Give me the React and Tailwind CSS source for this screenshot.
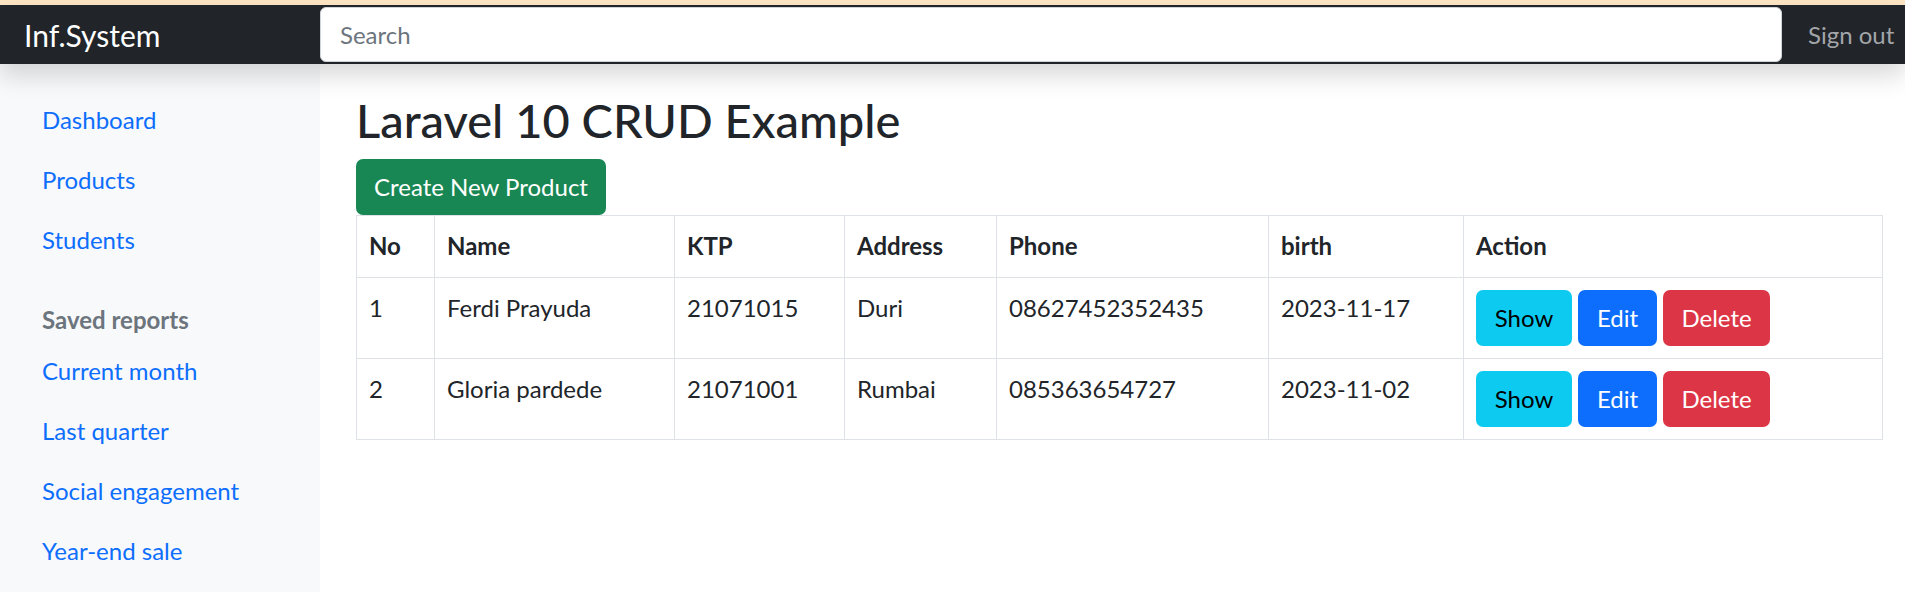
const sideLinks = ['Dashboard', 'Products', 'Students']
const reports = ['Current month', 'Last quarter', 'Social engagement', 'Year-end sale']

const rows = [
  { no: 1, name: 'Ferdi Prayuda', ktp: '21071015', address: 'Duri', phone: '08627452352435', birth: '2023-11-17' },
  { no: 2, name: 'Gloria pardede', ktp: '21071001', address: 'Rumbai', phone: '085363654727', birth: '2023-11-02' },
]

const cols = [
  ['No', 'w-[78px]'],
  ['Name', 'w-[240px]'],
  ['KTP', 'w-[170px]'],
  ['Address', 'w-[152px]'],
  ['Phone', 'w-[272px]'],
  ['birth', 'w-[195px]'],
  ['Action', ''],
]

export default function App() {
  return (
    <div className="min-h-screen bg-white text-[24px] text-[#212529] font-['Lato',sans-serif]">
      <div className="h-[5px] bg-[#fde6c4]" />
      <header className="relative z-10 flex h-[59px] items-center bg-[#212529] shadow-[0_12px_24px_rgba(0,0,0,0.15)]">
        <a className="w-[320px] shrink-0 pl-[24px] text-[30px] text-white leading-[36px]">Inf.System</a>
        <input
          type="text"
          placeholder="Search"
          className="h-[55px] flex-1 rounded-[6px] border border-[#ced4da] bg-white px-[19px] text-[24px] outline-none placeholder:text-[#6c757d]"
        />
        <a className="w-[123px] shrink-0 pl-[26px] text-[#a3a6a9] leading-[36px]">Sign out</a>
      </header>

      <div className="flex">
        <aside className="w-[320px] shrink-0 bg-[#f8f9fa] pt-[26px] pb-[11px] pl-[18px]">
          <nav className="flex flex-col">
            {sideLinks.map(l => (
              <a key={l} className="px-[24px] py-[12px] leading-[36px] text-[#0d6efd]">{l}</a>
            ))}
          </nav>
          <h6 className="mt-[32px] mb-[3px] px-[24px] font-bold leading-[36px] text-[#6c757d]">Saved reports</h6>
          <nav className="flex flex-col">
            {reports.map(l => (
              <a key={l} className="px-[24px] py-[12px] leading-[36px] text-[#0d6efd]">{l}</a>
            ))}
          </nav>
        </aside>

        <main className="flex-1 pt-[27px] pl-[36px] pr-[22px]">
          <h2 className="mb-[10px] text-[47px] font-medium leading-[58px]">Laravel 10 CRUD Example</h2>
          <button className="h-[56px] w-[250px] rounded-[7px] bg-[#198754] text-white leading-[36px]">Create New Product</button>
          <table className="w-full table-fixed border-collapse">
            <thead>
              <tr>
                {cols.map(([c, w]) => (
                  <th key={c} className={`${w} border border-[#dee2e6] px-[12px] pt-[12px] pb-[13px] text-left align-bottom font-bold leading-[36px]`}>{c}</th>
                ))}
              </tr>
            </thead>
            <tbody>
              {rows.map(r => (
                <tr key={r.no}>
                  {[r.no, r.name, r.ktp, r.address, r.phone, r.birth].map((v, i) => (
                    <td key={i} className="border border-[#dee2e6] px-[12px] py-[12px] align-top leading-[36px]">{v}</td>
                  ))}
                  <td className="border border-[#dee2e6] px-[12px] py-[12px] align-top">
                    <div className="flex gap-[6px]">
                      <button className="h-[56px] w-[96px] rounded-[7px] bg-[#0dcaf0] text-black">Show</button>
                      <button className="h-[56px] w-[79px] rounded-[7px] bg-[#0d6efd] text-white">Edit</button>
                      <button className="h-[56px] w-[107px] rounded-[7px] bg-[#dc3545] text-white">Delete</button>
                    </div>
                  </td>
                </tr>
              ))}
            </tbody>
          </table>
        </main>
      </div>
    </div>
  )
}
